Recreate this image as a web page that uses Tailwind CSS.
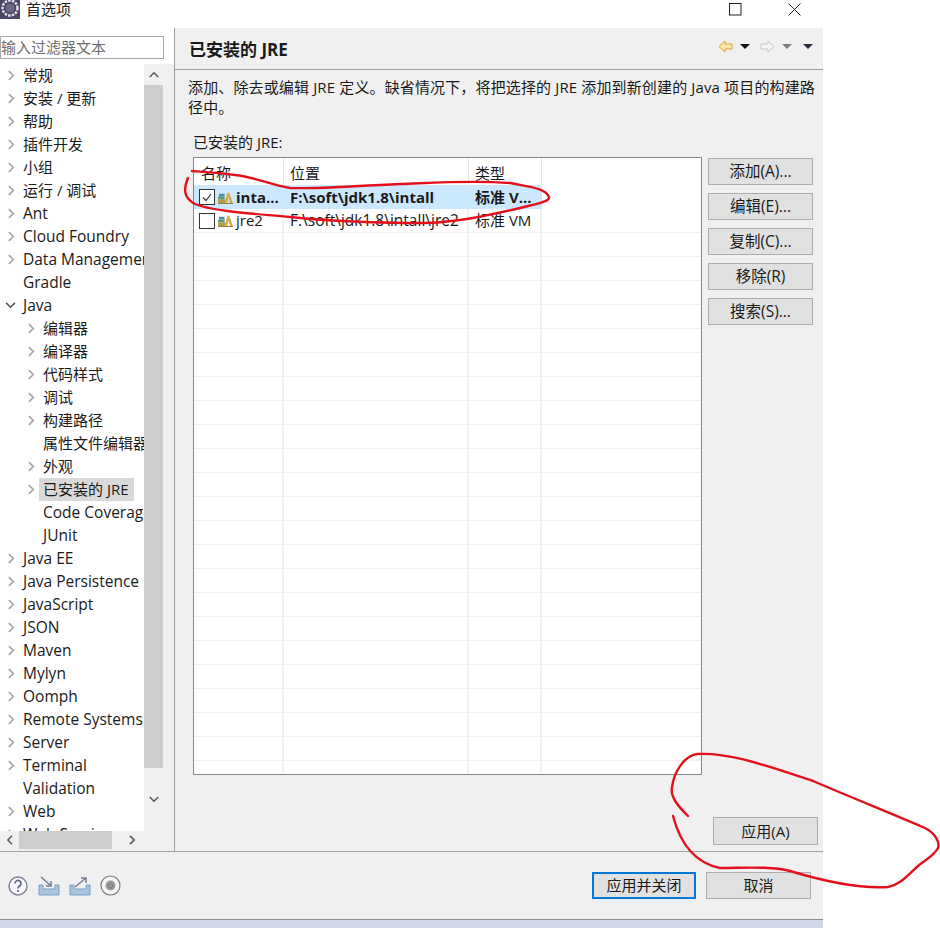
<!DOCTYPE html>
<html lang="zh">
<head>
<meta charset="utf-8">
<script src="https://cdn.jsdelivr.net/npm/@tailwindcss/browser@4"></script>
<title>首选项</title>
</head>
<body class="bg-white">
<svg class="hidden">
    <symbol id="right" viewBox="0 0 8 12"><path d="M1 1l5 5-5 5" fill="none" stroke="currentColor" stroke-width="2"/></symbol>
    <symbol id="down" viewBox="0 0 12 8"><path d="M1 1l5 5 5-5" fill="none" stroke="currentColor" stroke-width="1.8"/></symbol>
    <symbol id="up" viewBox="0 0 12 8"><path d="M1 7l5-5 5 5" fill="none" stroke="currentColor" stroke-width="1.8"/></symbol>
    <symbol id="left" viewBox="0 0 8 12"><path d="M7 1L2 6l5 5" fill="none" stroke="currentColor" stroke-width="1.8"/></symbol>
    <symbol id="jre" viewBox="0 0 16 14">
        <path d="M0 13V9h8v4z" fill="#b79a4c"/><path d="M0 9V6h7v3z" fill="#5d9a6a"/><path d="M1 6V3h6v3z" fill="#4d8fa8"/>
        <path d="M7 13L10 2h2l4 11h-3l-2-6-1 6z" fill="#d8ad48"/><path d="M0 13.5h16" stroke="#8a6d3a" stroke-width="1"/>
    </symbol>
</svg>

<div class="relative w-[940px] h-[928px] overflow-hidden font-['Open_Sans','Noto_Sans_CJK_SC',sans-serif] text-[15px] text-[#1a1a1a]">

    <!-- title bar -->
    <div class="flex items-start h-[28px] w-full bg-white">
        <svg class="w-[20px] h-[20px] -mt-[1px]" viewBox="0 0 20 20">
            <rect width="20" height="20" fill="#4a4668"/>
            <circle cx="10" cy="9" r="7.5" fill="none" stroke="#e8e6ee" stroke-width="2.4" stroke-dasharray="2.5 1.2"/>
            <circle cx="10" cy="9" r="4.6" fill="#6b6785"/>
        </svg>
        <span class="ml-[6px] leading-[18px] text-[#222]">首选项</span>
        <svg class="ml-auto mt-[3px] w-[13px] h-[13px]" viewBox="0 0 13 13"><rect x="0.5" y="0.5" width="11.5" height="11.5" fill="none" stroke="#222"/></svg>
        <svg class="ml-[46px] mr-[139px] mt-[3px] w-[13px] h-[13px]" viewBox="0 0 13 13"><path d="M0.5 0.5l12 12M12.5 0.5l-12 12" stroke="#222" fill="none"/></svg>
    </div>

    <div class="w-[823px]">
        <!-- main area -->
        <div class="flex h-[823px]">
            <!-- left pane -->
            <div class="w-[174px] flex flex-col">
                <div class="h-[36px] bg-white pt-[8px]">
                    <div class="w-[164px] h-[23px] border border-[#a9a9a9] bg-white leading-[21px] text-[#6d6d6d]">输入过滤器文本</div>
                </div>
                <div class="flex-1 flex flex-col bg-[#f0f0f0]">
                    <div class="flex h-[767px]">
                        <div class="w-[144px] bg-white overflow-hidden whitespace-nowrap leading-[23px]">
                            <div class="flex items-center h-[23px] pl-[8px]"><svg class="shrink-0 w-[7px] h-[11px] text-[#a6a6a6]"><use href="#right"/></svg><span class="ml-[8px]">常规</span></div>
                            <div class="flex items-center h-[23px] pl-[8px]"><svg class="shrink-0 w-[7px] h-[11px] text-[#a6a6a6]"><use href="#right"/></svg><span class="ml-[8px]">安装 / 更新</span></div>
                            <div class="flex items-center h-[23px] pl-[8px]"><svg class="shrink-0 w-[7px] h-[11px] text-[#a6a6a6]"><use href="#right"/></svg><span class="ml-[8px]">帮助</span></div>
                            <div class="flex items-center h-[23px] pl-[8px]"><svg class="shrink-0 w-[7px] h-[11px] text-[#a6a6a6]"><use href="#right"/></svg><span class="ml-[8px]">插件开发</span></div>
                            <div class="flex items-center h-[23px] pl-[8px]"><svg class="shrink-0 w-[7px] h-[11px] text-[#a6a6a6]"><use href="#right"/></svg><span class="ml-[8px]">小组</span></div>
                            <div class="flex items-center h-[23px] pl-[8px]"><svg class="shrink-0 w-[7px] h-[11px] text-[#a6a6a6]"><use href="#right"/></svg><span class="ml-[8px]">运行 / 调试</span></div>
                            <div class="flex items-center h-[23px] pl-[8px]"><svg class="shrink-0 w-[7px] h-[11px] text-[#a6a6a6]"><use href="#right"/></svg><span class="ml-[8px] text-[15.5px]">Ant</span></div>
                            <div class="flex items-center h-[23px] pl-[8px]"><svg class="shrink-0 w-[7px] h-[11px] text-[#a6a6a6]"><use href="#right"/></svg><span class="ml-[8px] text-[15.5px]">Cloud Foundry</span></div>
                            <div class="flex items-center h-[23px] pl-[8px]"><svg class="shrink-0 w-[7px] h-[11px] text-[#a6a6a6]"><use href="#right"/></svg><span class="ml-[8px] text-[15.5px]">Data Management</span></div>
                            <div class="flex items-center h-[23px] pl-[23px] text-[15.5px]">Gradle</div>
                            <div class="flex items-center h-[23px] pl-[5px]"><svg class="shrink-0 w-[11px] h-[7px] text-[#555]"><use href="#down"/></svg><span class="ml-[7px] text-[15.5px]">Java</span></div>
                            <div class="flex items-center h-[23px] pl-[28px]"><svg class="shrink-0 w-[7px] h-[11px] text-[#a6a6a6]"><use href="#right"/></svg><span class="ml-[8px]">编辑器</span></div>
                            <div class="flex items-center h-[23px] pl-[28px]"><svg class="shrink-0 w-[7px] h-[11px] text-[#a6a6a6]"><use href="#right"/></svg><span class="ml-[8px]">编译器</span></div>
                            <div class="flex items-center h-[23px] pl-[28px]"><svg class="shrink-0 w-[7px] h-[11px] text-[#a6a6a6]"><use href="#right"/></svg><span class="ml-[8px]">代码样式</span></div>
                            <div class="flex items-center h-[23px] pl-[28px]"><svg class="shrink-0 w-[7px] h-[11px] text-[#a6a6a6]"><use href="#right"/></svg><span class="ml-[8px]">调试</span></div>
                            <div class="flex items-center h-[23px] pl-[28px]"><svg class="shrink-0 w-[7px] h-[11px] text-[#a6a6a6]"><use href="#right"/></svg><span class="ml-[8px]">构建路径</span></div>
                            <div class="flex items-center h-[23px] pl-[43px]">属性文件编辑器</div>
                            <div class="flex items-center h-[23px] pl-[28px]"><svg class="shrink-0 w-[7px] h-[11px] text-[#a6a6a6]"><use href="#right"/></svg><span class="ml-[8px]">外观</span></div>
                            <div class="flex items-center h-[23px] pl-[28px]"><svg class="shrink-0 w-[7px] h-[11px] text-[#a6a6a6]"><use href="#right"/></svg><span class="ml-[4px] px-[4px] w-[95px] bg-[#d9d9d9]">已安装的 JRE</span></div>
                            <div class="flex items-center h-[23px] pl-[43px] text-[15.5px]">Code Coverage</div>
                            <div class="flex items-center h-[23px] pl-[43px] text-[15.5px]">JUnit</div>
                            <div class="flex items-center h-[23px] pl-[8px]"><svg class="shrink-0 w-[7px] h-[11px] text-[#a6a6a6]"><use href="#right"/></svg><span class="ml-[8px] text-[15.5px]">Java EE</span></div>
                            <div class="flex items-center h-[23px] pl-[8px]"><svg class="shrink-0 w-[7px] h-[11px] text-[#a6a6a6]"><use href="#right"/></svg><span class="ml-[8px] text-[15.5px]">Java Persistence</span></div>
                            <div class="flex items-center h-[23px] pl-[8px]"><svg class="shrink-0 w-[7px] h-[11px] text-[#a6a6a6]"><use href="#right"/></svg><span class="ml-[8px] text-[15.5px]">JavaScript</span></div>
                            <div class="flex items-center h-[23px] pl-[8px]"><svg class="shrink-0 w-[7px] h-[11px] text-[#a6a6a6]"><use href="#right"/></svg><span class="ml-[8px] text-[15.5px]">JSON</span></div>
                            <div class="flex items-center h-[23px] pl-[8px]"><svg class="shrink-0 w-[7px] h-[11px] text-[#a6a6a6]"><use href="#right"/></svg><span class="ml-[8px] text-[15.5px]">Maven</span></div>
                            <div class="flex items-center h-[23px] pl-[8px]"><svg class="shrink-0 w-[7px] h-[11px] text-[#a6a6a6]"><use href="#right"/></svg><span class="ml-[8px] text-[15.5px]">Mylyn</span></div>
                            <div class="flex items-center h-[23px] pl-[8px]"><svg class="shrink-0 w-[7px] h-[11px] text-[#a6a6a6]"><use href="#right"/></svg><span class="ml-[8px] text-[15.5px]">Oomph</span></div>
                            <div class="flex items-center h-[23px] pl-[8px]"><svg class="shrink-0 w-[7px] h-[11px] text-[#a6a6a6]"><use href="#right"/></svg><span class="ml-[8px] text-[15.5px]">Remote Systems</span></div>
                            <div class="flex items-center h-[23px] pl-[8px]"><svg class="shrink-0 w-[7px] h-[11px] text-[#a6a6a6]"><use href="#right"/></svg><span class="ml-[8px] text-[15.5px]">Server</span></div>
                            <div class="flex items-center h-[23px] pl-[8px]"><svg class="shrink-0 w-[7px] h-[11px] text-[#a6a6a6]"><use href="#right"/></svg><span class="ml-[8px] text-[15.5px]">Terminal</span></div>
                            <div class="flex items-center h-[23px] pl-[23px] text-[15.5px]">Validation</div>
                            <div class="flex items-center h-[23px] pl-[8px]"><svg class="shrink-0 w-[7px] h-[11px] text-[#a6a6a6]"><use href="#right"/></svg><span class="ml-[8px] text-[15.5px]">Web</span></div>
                            <div class="flex items-center h-[23px] pl-[8px]"><svg class="shrink-0 w-[7px] h-[11px] text-[#a6a6a6]"><use href="#right"/></svg><span class="ml-[8px] text-[15.5px]">Web Services</span></div>
                        </div>
                        <!-- tree vertical scrollbar -->
                        <div class="w-[19px] flex flex-col items-center">
                            <div class="h-[21px] flex items-center"><svg class="w-[10px] h-[7px] text-[#555]"><use href="#up"/></svg></div>
                            <div class="w-full h-[683px] bg-[#cdcdcd]"></div>
                            <div class="flex-1 flex items-center"><svg class="w-[10px] h-[7px] text-[#555]"><use href="#down"/></svg></div>
                        </div>
                    </div>
                    <!-- tree horizontal scrollbar -->
                    <div class="flex items-center h-[18px] w-[163px]">
                        <div class="w-[19px] flex justify-center"><svg class="w-[7px] h-[10px] text-[#555]"><use href="#left"/></svg></div>
                        <div class="w-[93px] h-full bg-[#cdcdcd]"></div>
                        <div class="w-[40px] flex justify-center"><svg class="w-[7px] h-[10px] text-[#555]"><use href="#right"/></svg></div>
                    </div>
                </div>
            </div>

            <!-- right pane -->
            <div class="flex-1 border-l border-[#a0a0a0] bg-[#f0f0f0] flex flex-col">
                <div class="h-[42px] flex items-center border-b border-[#a0a0a0] pl-[14px]">
                    <span class="font-bold text-[17px] mt-[3px]">已安装的 JRE</span>
                    <div class="ml-auto flex items-center mr-[10px] mb-[5px]">
                        <svg class="w-[15px] h-[13px]" viewBox="0 0 15 13"><path d="M1 6.5L7 1v3h7v5H7v3z" fill="#fbe6a8" stroke="#e0a030"/></svg>
                        <svg class="ml-[7px] w-[10px] h-[5px]" viewBox="0 0 10 5"><path d="M0 0h10L5 5z" fill="#111"/></svg>
                        <svg class="ml-[10px] w-[15px] h-[13px]" viewBox="0 0 15 13"><path d="M14 6.5L8 1v3H1v5h7v3z" fill="#f4f4f4" stroke="#c4c4c4"/></svg>
                        <svg class="ml-[7px] w-[10px] h-[5px]" viewBox="0 0 10 5"><path d="M0 0h10L5 5z" fill="#808080"/></svg>
                        <svg class="ml-[11px] w-[10px] h-[5px]" viewBox="0 0 10 5"><path d="M0 0h10L5 5z" fill="#2c2c3c"/></svg>
                    </div>
                </div>
                <div class="pl-[13px] pr-[4px] pt-[7px] leading-[20px] tracking-[0.14px]">添加、除去或编辑 JRE 定义。缺省情况下，将把选择的 JRE 添加到新创建的 Java 项目的构建路径中。</div>
                <div class="pl-[18px] mt-[15px] leading-[20px]">已安装的 JRE:</div>
                <div class="flex mt-[5px] pl-[18px]">
                    <!-- table -->
                    <div class="w-[509px] h-[618px] border border-[#828790] bg-white overflow-hidden">
                        <div class="flex h-[27px] leading-[30px]">
                            <div class="w-[90px] pl-[7px] border-r border-[#e5e5e5]">名称</div>
                            <div class="w-[185px] pl-[6px] border-r border-[#e5e5e5]">位置</div>
                            <div class="w-[73px] pl-[6px] border-r border-[#e5e5e5]">类型</div>
                        </div>
                        <div class="flex h-[24px] w-[348px] bg-[#cce8ff] font-bold items-center whitespace-nowrap">
                            <div class="w-[90px] flex items-center pl-[5px]">
                                <div class="w-[16px] h-[16px] border border-[#333] bg-white flex items-center justify-center"><svg class="w-[10px] h-[9px]" viewBox="0 0 10 9"><path d="M1 4.5l3 3 5-6.5" fill="none" stroke="#333" stroke-width="1.2"/></svg></div>
                                <svg class="ml-[3px] w-[15px] h-[13px]"><use href="#jre"/></svg>
                                <span class="ml-[3px]">inta...</span>
                            </div>
                            <div class="w-[185px] pl-[6px]">F:\soft\jdk1.8\intall</div>
                            <div class="w-[73px] pl-[6px]">标准 V...</div>
                        </div>
                        <div class="border-b border-[#f0f0f0]">
                            <div class="flex h-[23px] w-[348px] items-center whitespace-nowrap">
                                <div class="w-[90px] flex items-center pl-[5px] h-full border-r-2 border-[#f0f0f0]">
                                    <div class="w-[16px] h-[16px] border border-[#333] bg-white"></div>
                                    <svg class="ml-[3px] w-[15px] h-[13px]"><use href="#jre"/></svg>
                                    <span class="ml-[3px]">jre2</span>
                                </div>
                                <div class="w-[185px] pl-[6px] h-full flex items-center border-r-2 border-[#f0f0f0] text-[15.5px]">F:\soft\jdk1.8\intall\jre2</div>
                                <div class="w-[73px] pl-[6px] h-full flex items-center border-r-2 border-[#f0f0f0]">标准 VM</div>
                            </div>
                        </div>
                        <div id="blank"></div>
                    </div>
                    <!-- side buttons -->
                    <div class="ml-[6px] mt-[1px] flex flex-col gap-[8px] text-[15.5px]">
                        <div class="w-[105px] h-[27px] bg-[#e1e1e1] border border-[#adadad] flex items-center justify-center">添加(A)...</div>
                        <div class="w-[105px] h-[27px] bg-[#e1e1e1] border border-[#adadad] flex items-center justify-center">编辑(E)...</div>
                        <div class="w-[105px] h-[27px] bg-[#e1e1e1] border border-[#adadad] flex items-center justify-center">复制(C)...</div>
                        <div class="w-[105px] h-[27px] bg-[#e1e1e1] border border-[#adadad] flex items-center justify-center">移除(R)</div>
                        <div class="w-[105px] h-[27px] bg-[#e1e1e1] border border-[#adadad] flex items-center justify-center">搜索(S)...</div>
                    </div>
                </div>
                <div class="flex justify-end pr-[5px] mt-[42px]">
                    <div class="w-[105px] h-[28px] bg-[#e1e1e1] border border-[#adadad] flex items-center justify-center">应用(A)</div>
                </div>
            </div>
        </div>

        <!-- footer -->
        <div class="h-[68px] border-t border-[#a0a0a0] bg-[#f0f0f0] flex items-start">
            <div class="flex items-center mt-[23px] ml-[8px]">
                <svg class="w-[20px] h-[20px]" viewBox="0 0 20 20">
                    <circle cx="10" cy="10" r="9" fill="#fbfbfd" stroke="#7a7f96" stroke-width="1.4"/>
                    <path d="M7 7.5a3 3 0 1 1 4.6 2.5c-1 .7-1.6 1.2-1.6 2.4" fill="none" stroke="#5c6480" stroke-width="1.7"/>
                    <circle cx="10" cy="15" r="1.1" fill="#5c6480"/>
                </svg>
                <svg class="ml-[10px] w-[22px] h-[20px]" viewBox="0 0 22 20">
                    <path d="M1 9h4v4h12V9h4v10H1z" fill="#a9c4e0" stroke="#7f9fc2"/>
                    <path d="M3 1l10 9M13 5v5H8" fill="none" stroke="#6f7f95" stroke-width="1.5"/>
                </svg>
                <svg class="ml-[9px] w-[22px] h-[20px]" viewBox="0 0 22 20">
                    <path d="M1 9h4v4h12V9h4v10H1z" fill="#a9c4e0" stroke="#7f9fc2"/>
                    <path d="M6 11l11-9M12 2h5v5" fill="none" stroke="#6f7f95" stroke-width="1.5"/>
                </svg>
                <svg class="ml-[9px] w-[21px] h-[21px]" viewBox="0 0 21 21">
                    <circle cx="10.5" cy="10.5" r="9.5" fill="#f6f6f6" stroke="#808080" stroke-width="1.2"/>
                    <circle cx="10.5" cy="10.5" r="5" fill="#9a9a9a"/>
                    <circle cx="10.5" cy="10.5" r="2.2" fill="none" stroke="#7c7c7c"/>
                </svg>
            </div>
            <div class="ml-auto mt-[20px] w-[104px] h-[27px] bg-[#e1e1e1] border-2 border-[#0078d7] flex items-center justify-center">应用并关闭</div>
            <div class="ml-[10px] mr-[12px] mt-[20px] w-[105px] h-[27px] bg-[#e1e1e1] border border-[#adadad] flex items-center justify-center">取消</div>
        </div>
        <div class="h-[9px] border-t border-[#8a8f99] bg-[#d3d8e6]"></div>
    </div>

    <!-- red pen marks drawn over the screenshot -->
    <svg class="absolute inset-0 pointer-events-none" width="940" height="928" fill="none" stroke="#e3101c" stroke-width="2.4" stroke-linecap="round">
        <path d="M188 178C183 190 184 198 195 204C215 212 260 214 290 217C340 222 380 223 425 223C460 222 490 215 520 208C535 204 550 202 549 197C545 188 530 187 510 183C470 180 430 183 400 184C350 186 320 189 290 188C268 184 255 177 235 175C220 173 205 172 192 171"/>
        <path d="M688 816C678 806 670 797 672 787C674 772 684 756 697 754C730 752 770 767 813 781C855 799 895 815 925 828C935 833 940 842 938 848C934 856 925 860 918 866C908 875 900 885 888 887C860 889 820 880 790 871C770 866 745 868 720 868C700 864 682 850 673 816"/>
    </svg>
</div>

<script>
    var out = ''
    for (var i = 0; i < 23; i++) {
        out += '<div class="h-[24px] border-b border-[#f0f0f0]"><div class="flex h-full w-[348px]"><div class="w-[90px] border-r-2 border-[#f0f0f0]"></div><div class="w-[185px] border-r-2 border-[#f0f0f0]"></div><div class="w-[73px] border-r-2 border-[#f0f0f0]"></div></div></div>'
    }
    document.getElementById('blank').innerHTML = out
</script>
</body>
</html>
